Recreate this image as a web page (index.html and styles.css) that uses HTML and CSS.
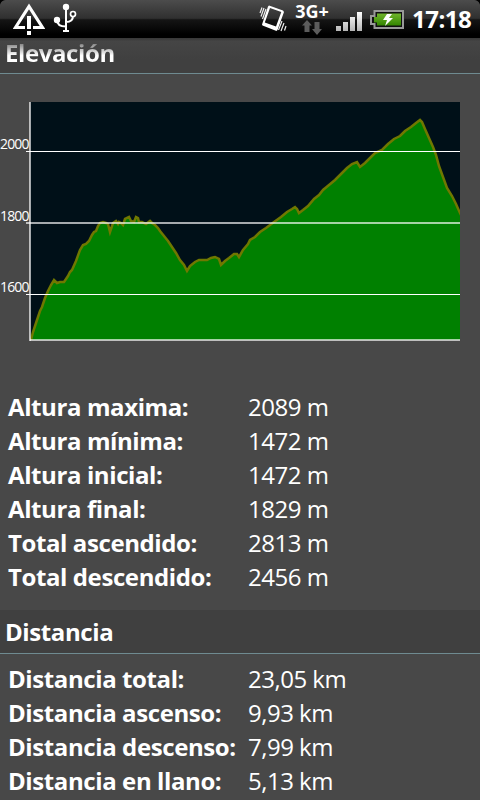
FILE: index.html
```html
<!DOCTYPE html>
<html lang="es">
<head>
  <meta charset="UTF-8">
  <meta name="viewport" content="width=device-width, initial-scale=1.0">
  <title>Estadísticas</title>
  <link rel="stylesheet" href="styles.css">
</head>
<body>
  <header class="status-bar">
    <div class="status-left">
      <svg class="icon-alert" width="32" height="36" viewBox="0 0 32 36">
        <path d="M20 27.500 H29.500 L16 6.500 L2.500 27.500 H12" fill="none" stroke="#fff" stroke-width="3.200"/>
        <path d="M14 16h4v13h-4z M14 31h4v4h-4z" fill="#fff"/>
      </svg>
      <svg class="icon-usb" width="24" height="30" viewBox="0 0 24 30">
        <path d="M13 4 V28 M4 18 C4 22 7 24.500 13 24.500 M13 20 C18 20 20 18 20 14" fill="none" stroke="#fff" stroke-width="2"/>
        <circle cx="13" cy="5" r="3.200" fill="#fff"/>
        <circle cx="4" cy="18" r="3.200" fill="#fff"/>
        <circle cx="20" cy="12" r="2.500" fill="#222" stroke="#fff" stroke-width="1.700"/>
        <path d="M10 28h6v2h-6z" fill="#fff"/>
      </svg>
    </div>
    <div class="status-right">
      <svg class="icon-vibrate" width="29" height="28" viewBox="0 0 29 28">
        <path fill-rule="evenodd" d="M11 1.500 L25 6.500 L26 8 L19.500 26 L18.500 27 L4.500 21.500 L4 20.500 L10 2.500z M12 4 L6.800 18.500 L18 22.500 L23.300 8z" fill="#fff"/>
        <path d="M4 3.500 L2 9 M6 4 L3 12.500 M8 5 L4.500 15 M24 17 L20.500 26 M26 19 L23 27 M28 22 L26.500 26.500" stroke="#eee" stroke-width="1.200"/>
      </svg>
      <div class="network">
        <span>3G+</span>
        <svg width="20" height="15" viewBox="0 0 20 15">
          <path d="M5 0 L10 5.500 H7.500 V12 H2.500 V5.500 H0z M12.500 2 H17.500 V9 H20 L15 15 L10 9 H12.500z" fill="#5c5c5c"/>
        </svg>
      </div>
      <svg class="icon-signal" width="26" height="20" viewBox="0 0 26 20">
        <defs>
          <linearGradient id="bars" x1="0" y1="0" x2="0" y2="1"><stop offset="0" stop-color="#fff"/><stop offset="1" stop-color="#b5b5b5"/></linearGradient>
          <linearGradient id="charge" x1="0" y1="0" x2="0" y2="1"><stop offset="0" stop-color="#70b52c"/><stop offset="1" stop-color="#338500"/></linearGradient>
        </defs>
        <path d="M0 14h5v5H0z M7 10h5v9H7z M14 5h5v14h-5z M21 0h5v19h-5z" fill="url(#bars)"/>
      </svg>
      <svg class="icon-battery" width="34" height="20" viewBox="0 0 34 20">
        <path d="M4.500 1 H33 V18 H4.500 V14 H1 V6 H4.500z" fill="#111" stroke="#999" stroke-width="2"/>
        <path d="M7 3.500h24v12H7v-3H4V7h3z" fill="url(#charge)"/>
        <path d="M17 4h5l-3 4h4l-8 8 2-6h-4z" fill="#fff"/>
      </svg>
      <span class="clock">17:18</span>
    </div>
  </header>

  <main>
    <section>
      <h2 class="section-title first"><span>Elevación</span></h2>
      <!-- 200 m = 71.5px, base line at 1472 m -->
      <svg class="chart" width="480" height="240" viewBox="0 101 480 240">
        <clipPath id="plot"><rect x="30" y="102" width="430" height="238"/></clipPath>
        <rect x="30" y="102" width="430" height="238" fill="#001018"/>
        <path class="profile" clip-path="url(#plot)" d="M31 340 L33 332 36 323 40 311 42 307 45 298 48 291 51 285 54 280 57 283 60 282 64 282 68 276 70 272 72 270 76 261 80 250 83 245 86 244 89 241 92 235 94 232 96 231 98 226 100 223 103 222 106 223 108 224 110 232 113 223 116 221 118 224 119 222 121 223 123 225 125 219 129 217 131 221 134 222 136 217 138 218 139 222 142 222 146 224 150 221 152 223 155 225 158 228 160 231 164 236 168 241 172 247 176 253 180 260 184 265 187 271 190 266 195 262 199 260 204 260 207 260 211 258 215 257 219 259 221 265 225 261 229 258 234 254 237 254 239 257 243 250 248 244 250 240 255 237 260 232 266 228 274 222 281 217 287 212 292 209 295 207 297 209 299 213 303 210 308 206 314 199 319 195 323 190 329 185 335 180 341 174 347 168 352 164 357 162 360 167 365 163 370 158 375 153 382 150 388 144 394 139 400 136 405 131 411 127 416 123 420 120 422 122 425 129 429 138 433 147 436 155 439 166 443 177 447 188 452 196 456 204 460 213 464 221 V344 H30z"/>
        <path d="M26 151.500H460 M26 294.500H460" stroke="#fff"/>
        <path d="M26 223H460 M30 340H460" stroke="#fff" stroke-opacity=".65" stroke-width="2"/>
        <path d="M30 102V341" stroke="#fff" stroke-opacity=".65" stroke-width="2"/>
        <text x="0" y="149" textLength="29.500">2000</text>
        <text x="0" y="221" textLength="29.500">1800</text>
        <text x="0" y="292" textLength="29.500">1600</text>
      </svg>
      <dl class="stats elevation">
        <dt>Altura maxima:</dt><dd>2089 m</dd>
        <dt>Altura mínima:</dt><dd>1472 m</dd>
        <dt>Altura inicial:</dt><dd>1472 m</dd>
        <dt>Altura final:</dt><dd>1829 m</dd>
        <dt>Total ascendido:</dt><dd>2813 m</dd>
        <dt>Total descendido:</dt><dd>2456 m</dd>
      </dl>
    </section>

    <section>
      <h2 class="section-title">Distancia</h2>
      <dl class="stats">
        <dt>Distancia total:</dt><dd>23,05 km</dd>
        <dt>Distancia ascenso:</dt><dd>9,93 km</dd>
        <dt>Distancia descenso:</dt><dd>7,99 km</dd>
        <dt>Distancia en llano:</dt><dd>5,13 km</dd>
      </dl>
    </section>
  </main>
</body>
</html>
```
FILE: styles.css
```css
* {
  box-sizing: border-box;
}

html {
  background: #000;
}

body {
  margin: 0;
  height: 800px;
  overflow: hidden;
  border-radius: 6px 6px 0 0;
  background: #484848;
  color: #fff;
  font-family: "Open Sans", "Noto Sans", sans-serif;
}

.status-bar {
  display: flex;
  justify-content: space-between;
  height: 38px;
  border-radius: 6px 6px 0 0;
  background: linear-gradient(#4c4c4c, #303030 48%, #151515 52%, #000 90%);
}

.status-left,
.status-right {
  display: flex;
  align-items: flex-start;
}

.status-left {
  padding-left: 13px;
}

.icon-usb {
  margin: 2px 0 0 8px;
}

.icon-vibrate {
  margin: 4px 8px 0 0;
}

.network {
  display: flex;
  flex-direction: column;
  align-items: center;
  width: 34px;
  margin-right: 7px;
  font-size: 18px;
  font-weight: 700;
  line-height: 20px;
}

.network span {
  height: 20px;
  padding-top: 1px;
}

.icon-signal {
  margin: 12px 8px 0 0;
}

.icon-battery {
  margin: 10px 8px 0 0;
}

.clock {
  width: 60px;
  margin-right: 8px;
  font-size: 24px;
  font-weight: 700;
  letter-spacing: -0.5px;
  line-height: 38px;
}

.section-title {
  height: 44px;
  margin: 0;
  padding-left: 5px;
  border-bottom: 1px solid #6f8b91;
  background: #404040;
  font-size: 24px;
  font-weight: 700;
  line-height: 44px;
  letter-spacing: -0.4px;
}

.section-title.first {
  height: 36px;
  line-height: 29px;
  background: linear-gradient(#383838, #454545 10%, #404040 60%);
}

/* scrolled title fades out under the status bar */
.section-title.first span {
  display: inline-block;
  background: linear-gradient(#777 15%, #fff 60%);
  background-clip: text;
  -webkit-background-clip: text;
  color: transparent;
}

.chart {
  display: block;
  margin-top: 27px;
}

.profile {
  fill: #008000;
  stroke: #6f7800;
  stroke-width: 2.5;
}

.chart text {
  fill: #fff;
  font-size: 14px;
}

.stats {
  display: grid;
  grid-template-columns: 240px 1fr;
  grid-auto-rows: 34px;
  margin: 0;
  padding: 8px 8px 0;
  font-size: 24px;
  line-height: 34px;
  white-space: nowrap;
}

.stats.elevation {
  padding: 49px 8px 16px;
}

.stats dt {
  font-weight: 700;
  letter-spacing: -0.4px;
}

.stats dd {
  margin: 0;
  letter-spacing: -0.5px;
}
```
